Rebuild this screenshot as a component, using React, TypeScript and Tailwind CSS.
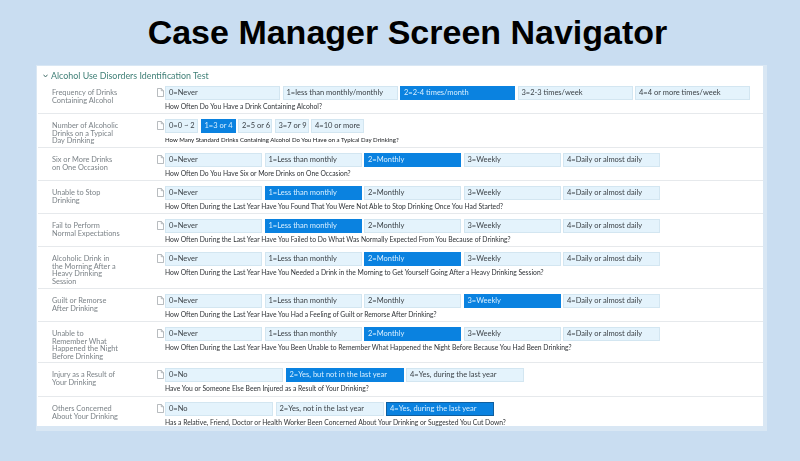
type Row = {
  label: string[];
  opts: string[];
  sel: number;
  w: number[];
  q: string;
  h: string;
  qc?: string;
};

const never = ["0=Never", "1=Less than monthly", "2=Monthly", "3=Weekly", "4=Daily or almost daily"];
const w97 = [97, 97, 97, 97, 97];

const rows: Row[] = [
  { label: ["Frequency of Drinks", "Containing Alcohol"], opts: ["0=Never", "1=less than monthly/monthly", "2=2-4 times/month", "3=2-3 times/week", "4=4 or more times/week"], sel: 2, w: [115, 115, 115, 115, 115], q: "How Often Do You Have a Drink Containing Alcohol?", h: "h-[33px]" },
  { label: ["Number of Alcoholic", "Drinks on a Typical", "Day Drinking"], opts: ["0=0 ~ 2", "1=3 or 4", "2=5 or 6", "3=7 or 9", "4=10 or more"], sel: 1, w: [33, 35, 34, 34, 53], q: "How Many Standard Drinks Containing Alcohol Do You Have on a Typical Day Drinking?", h: "h-[34px]", qc: "text-[6.1px] text-[#15181b]" },
  { label: ["Six or More Drinks", "on One Occasion"], opts: never, sel: 2, w: w97, q: "How Often Do You Have Six or More Drinks on One Occasion?", h: "h-[33px]" },
  { label: ["Unable to Stop", "Drinking"], opts: never, sel: 1, w: w97, q: "How Often During the Last Year Have You Found That You Were Not Able to Stop Drinking Once You Had Started?", h: "h-[33px]" },
  { label: ["Fail to Perform", "Normal Expectations"], opts: never, sel: 1, w: w97, q: "How Often During the Last Year Have You Failed to Do What Was Normally Expected From You Because of Drinking?", h: "h-[33px]" },
  { label: ["Alcoholic Drink in", "the Morning After a", "Heavy Drinking", "Session"], opts: never, sel: 2, w: w97, q: "How Often During the Last Year Have You Needed a Drink in the Morning to Get Yourself Going After a Heavy Drinking Session?", h: "h-[42px]" },
  { label: ["Guilt or Remorse", "After Drinking"], opts: never, sel: 3, w: w97, q: "How Often During the Last Year Have You Had a Feeling of Guilt or Remorse After Drinking?", h: "h-[33px]" },
  { label: ["Unable to", "Remember What", "Happened the Night", "Before Drinking"], opts: never, sel: 2, w: w97, q: "How Often During the Last Year Have You Been Unable to Remember What Happened the Night Before Because You Had Been Drinking?", h: "h-[41px]" },
  { label: ["Injury as a Result of", "Your Drinking"], opts: ["0=No", "2=Yes, but not in the last year", "4=Yes, during the last year"], sel: 1, w: [118, 118, 118], q: "Have You or Someone Else Been Injured as a Result of Your Drinking?", h: "h-[34px]" },
  { label: ["Others Concerned", "About Your Drinking"], opts: ["0=No", "2=Yes, not in the last year", "4=Yes, during the last year"], sel: 2, w: [108, 108, 108], q: "Has a Relative, Friend, Doctor or Health Worker Been Concerned About Your Drinking or Suggested You Cut Down?", h: "h-[29px]" },
];

function DocIcon() {
  return (
    <svg width="7" height="9" viewBox="0 0 7 9" className="shrink-0" fill="#fff" stroke="#9a9fa4" strokeWidth="0.7">
      <path d="M0.5 0.5H4.3L6.5 2.7V8.5H0.5Z" />
      <path d="M4.3 0.5V2.7H6.5" fill="none" />
    </svg>
  );
}

function QRow({ r, last }: { r: Row; last: boolean }) {
  return (
    <div className={`flex ${r.h} overflow-hidden pt-[5px] ${last ? "" : "border-b border-[#e6e9ec]"}`}>
      <div className="w-[118px] pl-[14px] pt-[3px] shrink-0 text-[7.4px] leading-[7.5px] text-[#7c8388] flex flex-col">
        {r.label.map((l) => (
          <span key={l} className="whitespace-nowrap">{l}</span>
        ))}
      </div>
      <div className="flex flex-col">
        <div className="flex items-start">
          <div className="pl-[0.5px] pr-[1.5px] pt-[1.5px]">
            <DocIcon />
          </div>
          <div className="flex gap-[2.5px]">
            {r.opts.map((o, i) => (
              <div
                key={o}
                style={{ width: r.w[i] }}
                className={`h-[13.5px] px-[3px] flex items-center text-[7.5px] whitespace-nowrap border ${
                  i === r.sel
                    ? `bg-[#0a82e0] text-[#d8efff] ${last ? "border-[#0f5f9f]" : "border-[#0a82e0]"}`
                    : "bg-[#e4f3fc] border-[#d3e6f1] text-[#3c4247]"
                }`}
              >
                {o}
              </div>
            ))}
          </div>
        </div>
        <div className={`pl-[9px] mt-[2.5px] leading-[9px] whitespace-nowrap ${r.qc ?? "text-[6.75px] text-[#2e3236]"}`}>
          {r.q}
        </div>
      </div>
    </div>
  );
}

export default function App() {
  return (
    <div className="w-[800px] h-[461px] overflow-hidden bg-[#c9ddf1] flex flex-col font-['Lato','Noto_Sans',sans-serif]">
      <h1 className="h-[65px] pt-[10px] pl-[15px] text-center font-bold text-[34px] leading-[44px] text-black font-['Liberation_Sans',sans-serif] whitespace-nowrap">
        Case Manager Screen Navigator
      </h1>
      <div className="ml-[36px] w-[731px] h-[366px] border-x-[1px] border-t-[1px] border-b-[5px] border-[#d9e7f4] pr-[3px] bg-[#d9e7f4]">
        <div className="bg-white h-full pl-[1px] blur-[0.3px]">
          <div className="h-[15px] pt-[4px] flex items-center pl-[5px] text-[8.9px] text-[#3f7f76]">
            <svg width="5" height="4" viewBox="0 0 5 4" className="mr-[3px]" fill="none" stroke="#49736e" strokeWidth="1">
              <path d="M0.5 0.7L2.5 3L4.5 0.7" />
            </svg>
            Alcohol Use Disorders Identification Test
          </div>
          {rows.map((r, i) => (
            <QRow key={r.label[0]} r={r} last={i === rows.length - 1} />
          ))}
        </div>
      </div>
    </div>
  );
}
